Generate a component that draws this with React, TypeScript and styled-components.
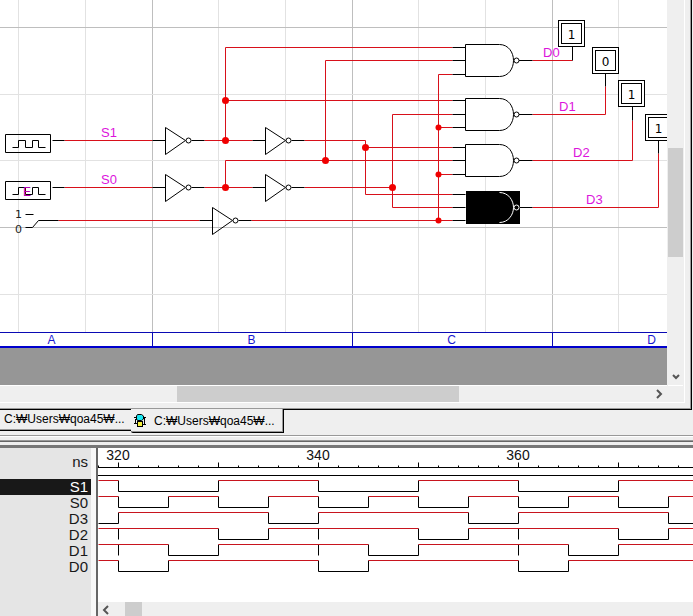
import React from 'react';
import styled, { createGlobalStyle } from 'styled-components';

const GlobalStyle = createGlobalStyle`
  * { box-sizing: border-box; }
  body { margin: 0; background: #efefef; font-family: "Liberation Sans", Arial, sans-serif; }
  button { font: inherit; padding: 0; border: 0; background: none; color: inherit; }
`;

const Page = styled.main`
  display: flex;
  flex-direction: column;
  min-height: 100vh;
  overflow: hidden;
`;

const SchematicWindow = styled.section`
  display: grid;
  grid-template-columns: minmax(0, 1fr) 16px;
  margin-right: 1px;
  padding-right: 8px;
  padding-bottom: 7px;
  border-right: 1px solid #000;
  border-bottom: 1px solid #000;
  box-shadow: inset -1px -1px #999, inset -6px -6px #efefef, inset -7px -7px #fff;
`;

const Sheet = styled.div`
  min-width: 0;
  overflow: hidden;
  background: #fff;
`;

const Drawing = styled.svg<{ $height: number }>`
  display: block;
  width: 100%;
  height: ${(p) => p.$height}px;
`;

const ColumnRuler = styled.div`
  display: flex;
  height: 16px;
  overflow: hidden;
  border-top: 1px solid #0a0ab4;
  border-bottom: 2px solid #0000cd;
  color: #1818d0;
  font-size: 12px;
  line-height: 14px;
  text-align: center;
`;

const RulerCell = styled.span<{ $first?: boolean }>`
  flex: 0 0 200px;
  padding-right: 2px;
  border-right: 1px solid #0a0ab4;
  margin-left: ${(p) => (p.$first ? '-47px' : '0')};
`;

const Desk = styled.div`
  height: 37px;
  background: #969696;
`;

const VerticalScroll = styled.div`
  display: flex;
  flex-direction: column;
  background: #efefef;
  margin-left: 1px;
  padding-top: 148px;
`;

const VerticalThumb = styled.div`
  height: 109px;
  background: #cdcdcd;
`;

const ArrowButton = styled.button`
  display: grid;
  place-items: center;
  width: 16px;
  height: 16px;
  flex: none;
`;

const Spacer = styled.div`
  flex: 1;
`;

const HorizontalScroll = styled.div`
  display: flex;
  height: 17px;
  background: #efefef;
  border-top: 1px solid #fff;
`;

const TimingScroll = styled.div`
  display: flex;
  height: 14px;
  background: #efefef;
`;

const HorizontalThumb = styled.div<{ $start: number; $width: number }>`
  width: ${(p) => p.$width}px;
  margin-left: ${(p) => p.$start}px;
  background: #cdcdcd;
`;

const TabStrip = styled.nav`
  display: flex;
  align-items: flex-start;
  height: 26px;
  border-bottom: 1px solid #999;
`;

const Tab = styled.button<{ $active?: boolean }>`
  display: flex;
  align-items: center;
  gap: 8px;
  position: relative;
  height: ${(p) => (p.$active ? 24 : 21)}px;
  width: ${(p) => (p.$active ? 153 : 131)}px;
  margin-top: ${(p) => (p.$active ? '-1px' : '0')};
  padding-left: ${(p) => (p.$active ? 3 : 4)}px;
  padding-bottom: ${(p) => (p.$active ? 0 : 2)}px;
  background: #efefef;
  border-bottom: 1px solid #000;
  border-right: ${(p) => (p.$active ? '1px solid #000' : '0')};
  border-bottom-left-radius: ${(p) => (p.$active ? 2 : 0)}px;
  box-shadow: ${(p) => (p.$active ? 'inset -1px -1px #999' : 'inset 0 -1px #999')};
  font-family: "Liberation Sans", "Noto Sans CJK KR", sans-serif;
  font-size: 12px;
  white-space: nowrap;
`;

const Splitter = styled.div`
  height: 12px;
  border-top: 1px solid #fff;
  border-bottom: 3px solid #777;
  background: linear-gradient(#efefef 3px, #999 3px, #999 4px, #666 4px, #666 5px, #efefef 5px);
`;

const TimingPane = styled.section`
  display: flex;
  flex: 1;
  min-height: 168px;
`;

const SignalList = styled.div`
  flex: 0 0 91px;
  background: #e5e5e5;
  color: #181818;
  font-size: 15px;
  text-align: right;
`;

const Unit = styled.div`
  height: 31px;
  padding: 5px 3px 0 0;
  line-height: 18px;
`;

const SignalName = styled.button<{ $selected?: boolean }>`
  display: block;
  width: 100%;
  height: 16px;
  padding-right: 3px;
  line-height: 16px;
  text-align: right;
  background: ${(p) => (p.$selected ? '#181818' : 'transparent')};
  color: ${(p) => (p.$selected ? '#fff' : '#181818')};
`;

const WavePane = styled.div`
  display: flex;
  flex-direction: column;
  flex: 1;
  min-width: 0;
  margin-left: 5px;
  border-left: 2px solid #666;
  background: #fff;
  box-shadow: -5px 0 #f8f8f8;
`;

const RED = '#d8101a';
const MAGENTA = '#dc14dc';

function Chevron({ d }: { d: string }) {
  return (
    <svg width="10" height="10" viewBox="0 0 10 10" fill="none" stroke="#555" strokeWidth="2">
      <path d={d} />
    </svg>
  );
}

function Inverter({ x, y }: { x: number; y: number }) {
  return (
    <g>
      <path d={`M${x - 13} ${y}H${x}M${x} ${y - 13}V${y + 14}L${x + 20} ${y}ZM${x + 26} ${y}H${x + 39}`} fill="none" />
      <circle cx={x + 23} cy={y} r="2.5" fill="#fff" />
    </g>
  );
}

function Nand({ y, inputs, selected }: { y: number; inputs: number[]; selected?: boolean }) {
  return (
    <g>
      <path d={`${inputs.map((i) => `M452 ${i}H465`).join('')}M518 ${y}H532`} />
      {selected ? (
        <>
          <rect x="466" y={y - 16} width="53" height="32" fill="#000" />
          <path d={`M499 ${y - 15}C508 ${y - 15} 513 ${y - 7} 513 ${y}S508 ${y + 15} 499 ${y + 15}`} fill="none" stroke="#fff" />
          <circle cx="516" cy={y} r="2.5" fill="#000" stroke="#fff" />
        </>
      ) : (
        <>
          <path d={`M465 ${y - 16}H499C508 ${y - 16} 513 ${y - 8} 513 ${y}S508 ${y + 16} 499 ${y + 16}H465Z`} fill="#fff" />
          <circle cx="516" cy={y} r="2.5" fill="#fff" />
        </>
      )}
    </g>
  );
}

function Clock({ y }: { y: number }) {
  return (
    <path
      fill="none"
      d={`M5 ${y - 6}H50V${y + 12}H5ZM12 ${y + 7}H18V${y}H25V${y + 7}H32V${y}H38V${y + 7}H45M52 ${y}H64`}
    />
  );
}

function Probe({ x, y, value }: { x: number; y: number; value: string }) {
  return (
    <g>
      <rect x={x} y={y} width="26" height="26" fill="#fff" />
      <rect x={x + 3} y={y + 3} width="20" height="20" fill="none" />
      <text x={x + 13} y={y + 18} textAnchor="middle" fontSize="12" fill="#000" stroke="none" fontFamily="DejaVu Sans, Verdana, sans-serif">
        {value}
      </text>
    </g>
  );
}

const range = (n: number) => Array.from({ length: n }, (_, i) => i);

const gridTone = (i: number, major: number) => (i % 3 === major ? '#bebebe' : '#e2e2e2');
const gridX = range(24).map((i) => ({ at: 18 + Math.ceil((i * 200) / 3), tone: gridTone(i, 2) }));
const gridY = range(5).map((i) => ({ at: 27 + Math.round((i * 200) / 3), tone: gridTone(i, 0) }));

const wires = [
  'M64 140H152M64 187H152M58 220H199',
  'M204 140H252M225 140V47H452M225 100H452',
  'M204 187H252M225 187V160H452M325 160V60H452',
  'M304 140H365V194H452M365 147H452',
  'M304 187H392M452 114H392V207H452',
  'M251 220H452M438 220V74H452M438 127H452M438 174H452',
  'M532 60H572M532 114H605V86M532 160H632V120M532 207H658V153',
];

const joints = [
  [225, 100], [225, 140], [225, 187], [325, 160], [365, 147],
  [392, 187], [438, 127], [438, 174], [438, 220],
];

const netLabels = [
  { x: 101, y: 137, name: 'S1' },
  { x: 101, y: 184, name: 'S0' },
  { x: 543, y: 57, name: 'D0' },
  { x: 559, y: 111, name: 'D1' },
  { x: 573, y: 157, name: 'D2' },
  { x: 586, y: 204, name: 'D3' },
];

function Schematic() {
  return (
    <Drawing $height={332} role="img" aria-label="Decoder circuit">
      <g transform="translate(.5 .5)" stroke="#000">
        {gridX.map((g) => <path key={g.at} d={`M${g.at} -1V332`} stroke={g.tone} />)}
        {gridY.map((g) => <path key={g.at} d={`M-1 ${g.at}H1600`} stroke={g.tone} />)}
        <g fill="none" stroke={RED}>
          {wires.map((d) => <path key={d} d={d} />)}
        </g>
        <g fill="#f00000" stroke="none">
          {joints.map(([x, y]) => <circle key={`${x}-${y}`} cx={x} cy={y} r={x === 438 ? 3 : 3.5} />)}
        </g>
        <Clock y={140} />
        <Clock y={187} />
        <path d="M25 214H33M25 227H32L38 220H58" fill="none" />
        <Inverter x={165} y={140} />
        <Inverter x={165} y={187} />
        <Inverter x={265} y={140} />
        <Inverter x={265} y={187} />
        <Inverter x={212} y={220} />
        <Nand y={60} inputs={[47, 60, 74]} />
        <Nand y={114} inputs={[100, 114, 127]} />
        <Nand y={160} inputs={[147, 160, 174]} />
        <Nand y={207} inputs={[194, 207, 220]} selected />
        <path d="M572 46V60M605 73V86M632 106V120M658 140V153" />
        <Probe x={558} y={20} value="1" />
        <Probe x={592} y={47} value="0" />
        <Probe x={618} y={80} value="1" />
        <Probe x={645} y={114} value="1" />
      </g>
      <g fill={MAGENTA} fontSize="13">
        {netLabels.map((l) => <text key={l.name} x={l.x} y={l.y}>{l.name}</text>)}
        <text x="23" y="196" fontSize="12" fill="#b400b4">E</text>
      </g>
      <g fill="#222" fontSize="11" fontFamily="DejaVu Sans, Verdana, sans-serif">
        <text x="15" y="218">1</text>
        <text x="15" y="233">0</text>
      </g>
    </Drawing>
  );
}

type Signal = { name: string; start: number; toggles: number[]; glitch?: boolean };

/* Toggle positions are pixels within one 200px (20 ns) period. */
const signals: Signal[] = [
  { name: 'S1', start: 1, toggles: [0, 100] },
  { name: 'S0', start: 1, toggles: [0, 50, 100, 150] },
  { name: 'D3', start: 0, toggles: [0, 150] },
  { name: 'D2', start: 1, toggles: [100, 150], glitch: true },
  { name: 'D1', start: 1, toggles: [50, 100], glitch: true },
  { name: 'D0', start: 1, toggles: [0, 50] },
];

const ORIGIN = 20;
const PERIOD = 200;
const PERIODS = 8;

function Trace({ signal, top }: { signal: Signal; top: number }) {
  const low = top + 11;
  let high = '';
  let dark = '';
  let level = signal.start;
  let x = 0;
  for (const p of range(PERIODS)) {
    for (const t of signal.toggles) {
      const next = ORIGIN + p * PERIOD + t;
      if (level) high += `M${x} ${top}H${next}`;
      else dark += `M${x} ${low}H${next}`;
      dark += `M${next} ${top}V${low}`;
      level = 1 - level;
      x = next;
    }
    if (signal.glitch) dark += `M${ORIGIN + p * PERIOD} ${top}V${low}`;
  }
  return (
    <g fill="none">
      <path d={dark} stroke="#000" />
      <path d={high} stroke="#c8141e" />
    </g>
  );
}

function Waves() {
  return (
    <Drawing $height={154} role="img" aria-label="Timing diagram">
      <g transform="translate(.5 .5)" stroke="#000" fill="none">
        <path d="M-1 19H1600M-1 27H1600" />
        {range(80).map((i) => <path key={i} d={`M${i * 20} ${i % 5 === 1 ? 14 : 17}V19`} />)}
        {signals.map((s, i) => <Trace key={s.name} signal={s} top={32 + i * 16} />)}
      </g>
      <g fontSize="14" textAnchor="middle" fill="#111">
        {[320, 340, 360].map((time, i) => <text key={time} x={ORIGIN + i * PERIOD} y="12">{time}</text>)}
      </g>
    </Drawing>
  );
}

const IconSvg = styled.svg`
  flex: none;
`;

function GateIcon() {
  return (
    <IconSvg width="12" height="14" viewBox="0 0 12 14" stroke="#000" aria-hidden="true">
      <path d="M0 3.5H3M0 9.5H3M9 3.5H12M9 10.5H12M1.5 5.5H3M1.5 5V10M10.500 4V10" fill="none" />
      <path d="M3.500 .5H7.500L9.500 2V5L7.500 6.500H3.500L2.500 5V2Z" fill="#19e6f0" />
      <rect x="3.500" y="7.500" width="5" height="5" fill="#f5f03c" />
    </IconSvg>
  );
}

export default function App() {
  return (
    <>
      <GlobalStyle />
      <Page>
        <SchematicWindow>
          <Sheet>
            <Schematic />
            <ColumnRuler>
              {['A', 'B', 'C', 'D'].map((c, i) => (
                <RulerCell key={c} $first={i === 0}>{c}</RulerCell>
              ))}
            </ColumnRuler>
            <Desk />
            <HorizontalScroll>
              <HorizontalThumb $start={177} $width={282} />
              <Spacer />
              <ArrowButton aria-label="Scroll right"><Chevron d="M3 1L7 5L3 9" /></ArrowButton>
            </HorizontalScroll>
          </Sheet>
          <VerticalScroll>
            <VerticalThumb />
            <Spacer />
            <ArrowButton aria-label="Scroll down"><Chevron d="M2 3L5 6L8 3" /></ArrowButton>
            <HorizontalScroll />
          </VerticalScroll>
        </SchematicWindow>
        <TabStrip>
          <Tab>C:₩Users₩qoa45₩...</Tab>
          <Tab $active><GateIcon />C:₩Users₩qoa45₩...</Tab>
        </TabStrip>
        <Splitter />
        <TimingPane>
          <SignalList>
            <Unit>ns</Unit>
            {signals.map((s, i) => (
              <SignalName key={s.name} $selected={i === 0}>{s.name}</SignalName>
            ))}
          </SignalList>
          <WavePane>
            <Waves />
            <Spacer />
            <TimingScroll>
              <ArrowButton aria-label="Scroll left"><Chevron d="M7 1L3 5L7 9" /></ArrowButton>
              <HorizontalThumb $start={11} $width={17} />
            </TimingScroll>
          </WavePane>
        </TimingPane>
      </Page>
    </>
  );
}
